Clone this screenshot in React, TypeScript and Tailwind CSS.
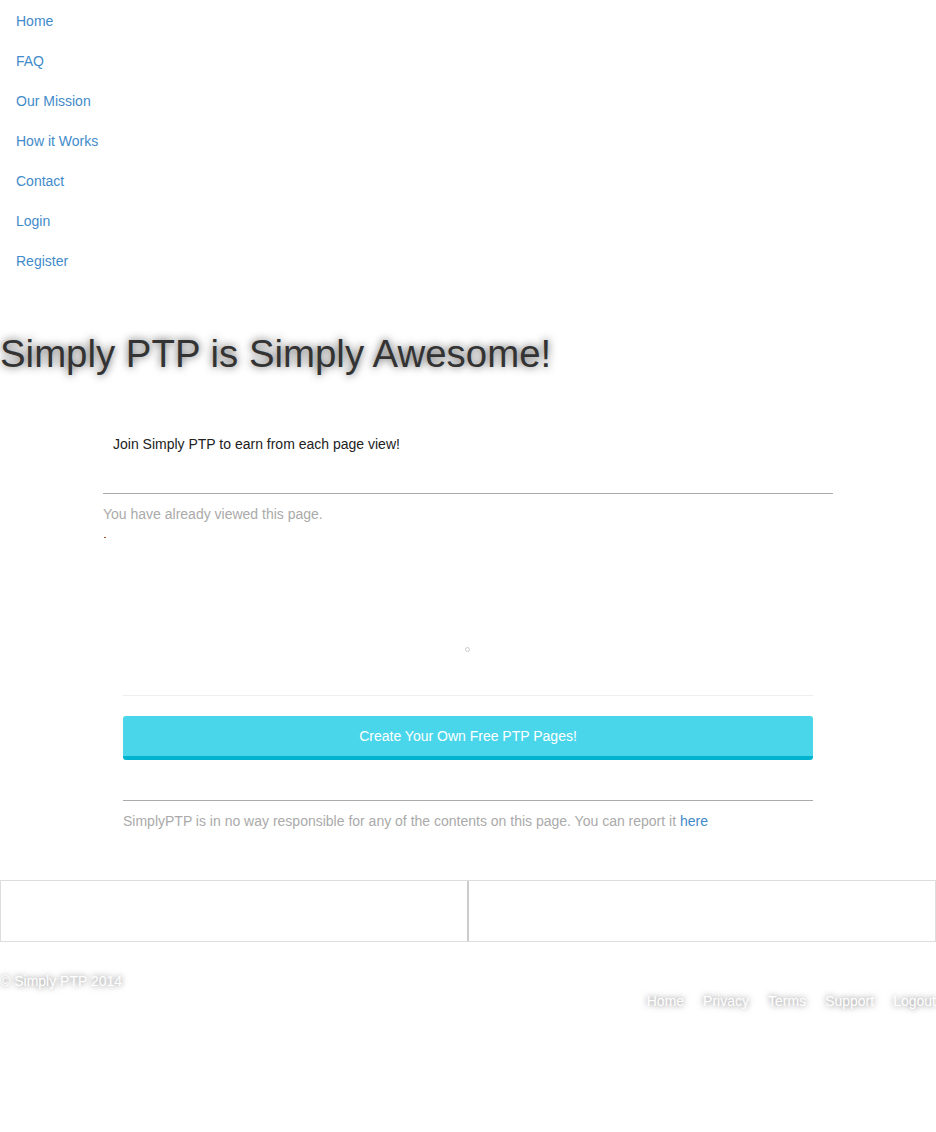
const NAV = ['Home', 'FAQ', 'Our Mission', 'How it Works', 'Contact', 'Login', 'Register']
const FOOT = ['Home', 'Privacy', 'Terms', 'Support', 'Logout']

export default function App() {
  return (
    <div className="min-h-[1132px] w-[936px] overflow-hidden bg-white font-['Liberation_Sans',Arial,sans-serif] text-[14px]">
      <ul className="pt-[12px]">
        {NAV.map((n) => (
          <li key={n} className="h-[40px] pl-[16px] leading-[18px]">
            <a className="text-[#428bca]">{n}</a>
          </li>
        ))}
      </ul>

      <h1 className="mt-[42px] text-[38.4px] leading-[40px] text-[#333] [text-shadow:0_0_9px_rgba(0,0,0,0.7)]">
        Simply PTP is Simply Awesome!
      </h1>

      <div className="mx-[103px] mt-[62px]">
        <p className="pl-[10px] leading-[16px] text-[#222]">Join Simply PTP to earn from each page view!</p>
        <div className="mt-[41px] border-t border-[#aaa]" />
        <p className="mt-[12px] leading-[16px] text-[#aaa]">You have already viewed this page.</p>
        <div className="mt-[15px] ml-[1px] h-px w-[2px] bg-[#a0522d]" />

        <div className="flex justify-center pt-[109px]">
          <span className="ml-[-1px] block h-[5px] w-[5px] rounded-full border border-[#ccc]" />
        </div>

        <div className="mx-[20px] mt-[43px] border-t border-[#eee]" />
        <button className="mx-[20px] mt-[20px] block h-[44px] w-[690px] rounded-[3px] border-b-4 border-[#00b3cf] bg-[#4ad6ea] text-[14px] text-white">
          Create Your Own Free PTP Pages!
        </button>
        <div className="mx-[20px] mt-[40px] border-t border-[#aaa]" />
        <p className="mx-[20px] mt-[12px] leading-[16px] text-[#aaa]">
          SimplyPTP is in no way responsible for any of the contents on this page. You can report it{' '}
          <a className="text-[#428bca]">here</a>
        </p>
      </div>

      <div className="mt-[51px] grid h-[62px] grid-cols-2 border border-[#ddd]">
        <div className="border-r border-[#ccc]" />
        <div className="border-l border-[#ccc]" />
      </div>

      <p className="mt-[31px] leading-[16px] text-white [text-shadow:0_0_6px_rgba(0,0,0,0.6)]">© Simply PTP 2014</p>
      <div className="mt-[4px] flex justify-end gap-[19px] leading-[16px] text-white [text-shadow:0_0_6px_rgba(0,0,0,0.6)]">
        {FOOT.map((f) => (
          <a key={f}>{f}</a>
        ))}
      </div>
    </div>
  )
}
